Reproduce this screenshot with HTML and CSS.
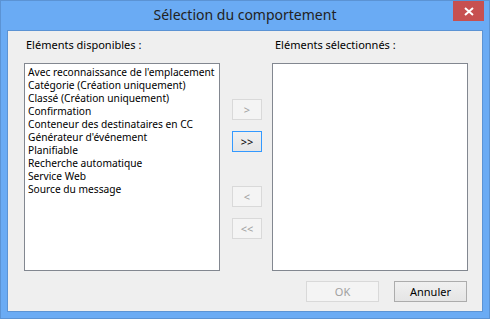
FILE: index.html
```html
<!DOCTYPE html>
<html lang="fr">
<head>
<meta charset="utf-8">
<title>Sélection du comportement</title>
<link rel="stylesheet" href="styles.css">
</head>
<body>
<div class="window">
  <div class="titlebar">
    <div class="title">Sélection du comportement</div>
    <div class="close" aria-label="Fermer">
      <svg width="10" height="9" viewBox="0 0 10 9"><path d="M1 1 L9 8 M9 1 L1 8" stroke="#fff" stroke-width="2" fill="none"/></svg>
    </div>
  </div>
  <div class="client">
    <div class="columns">
      <div class="col">
        <div class="label">Eléments disponibles :</div>
        <ul class="list">
          <li>Avec reconnaissance de l'emplacement</li>
          <li>Catégorie (Création uniquement)</li>
          <li>Classé (Création uniquement)</li>
          <li>Confirmation</li>
          <li>Conteneur des destinataires en CC</li>
          <li>Générateur d'événement</li>
          <li>Planifiable</li>
          <li>Recherche automatique</li>
          <li>Service Web</li>
          <li>Source du message</li>
        </ul>
      </div>
      <div class="mid">
        <button class="btn small disabled">&gt;</button>
        <button class="btn small focused">&gt;&gt;</button>
        <button class="btn small disabled gap">&lt;</button>
        <button class="btn small disabled">&lt;&lt;</button>
      </div>
      <div class="col">
        <div class="label right">Eléments sélectionnés :</div>
        <ul class="list"></ul>
      </div>
    </div>
    <div class="footer">
      <button class="btn wide disabled">OK</button>
      <button class="btn wide">Annuler</button>
    </div>
  </div>
</div>
</body>
</html>
```

FILE: styles.css
```css
* { box-sizing: border-box; }
html, body { margin: 0; padding: 0; }
body {
  width: 490px;
  height: 319px;
  overflow: hidden;
  font-family: "Noto Sans", "Open Sans", sans-serif;
  font-size: 11px;
  color: #000;
}
.window {
  width: 490px;
  height: 319px;
  background: #6aabf4;
  border: 1px solid #5b93d4;
  padding: 0 6px 6px 6px;
  display: flex;
  flex-direction: column;
}
.titlebar {
  height: 29px;
  position: relative;
  display: flex;
  align-items: center;
  justify-content: center;
}
.title {
  font-family: "Noto Sans", sans-serif;
  font-size: 14px;
  color: #222;
  margin-top: -2px;
}
.close {
  position: absolute;
  right: -1px;
  top: 0;
  width: 31px;
  height: 20px;
  background: #c75050;
  display: flex;
  align-items: center;
  justify-content: center;
}
.client {
  height: 282px;
  background: #efefef;
  border: 1px solid #5b93d4;
  padding: 0 14px 0 16px;
  display: flex;
  flex-direction: column;
}
.columns {
  display: flex;
  align-items: flex-start;
}
.col {
  width: 196px;
  display: flex;
  flex-direction: column;
}
.label {
  height: 32px;
  padding-top: 6px;
  padding-left: 2px;
  line-height: 16px;
}
.label.right { padding-left: 3px; }
.list {
  margin: 0;
  padding: 2px 3px 0;
  list-style: none;
  height: 208px;
  background: #fff;
  border: 1px solid #828790;
  font-size: 10.2px;
}
.list li {
  line-height: 13px;
  height: 13px;
  white-space: nowrap;
}
.mid {
  width: 30px;
  margin: 68px 10px 0 12px;
  display: flex;
  flex-direction: column;
}
.btn {
  font-family: "Noto Sans", sans-serif;
  font-size: 11px;
  padding: 0;
  height: 21px;
  border: 1px solid #acacac;
  background: linear-gradient(#f0f0f0, #e5e5e5);
  color: #000;
  line-height: 17px;
}
.btn.small { width: 30px; margin-bottom: 11px; }
.btn.small.gap { margin-top: 23px; }
.btn.disabled {
  border-color: #d9d9d9;
  background: #f4f4f4;
  color: #a0a0a0;
}
.btn.focused {
  border-color: #3399ff;
  background: linear-gradient(#f0f0f0, #e5e5e5);
}
.footer {
  display: flex;
  justify-content: flex-end;
  gap: 15px;
  margin-top: 10px;
  padding-right: 1px;
}
.btn.wide { width: 73px; }
```
